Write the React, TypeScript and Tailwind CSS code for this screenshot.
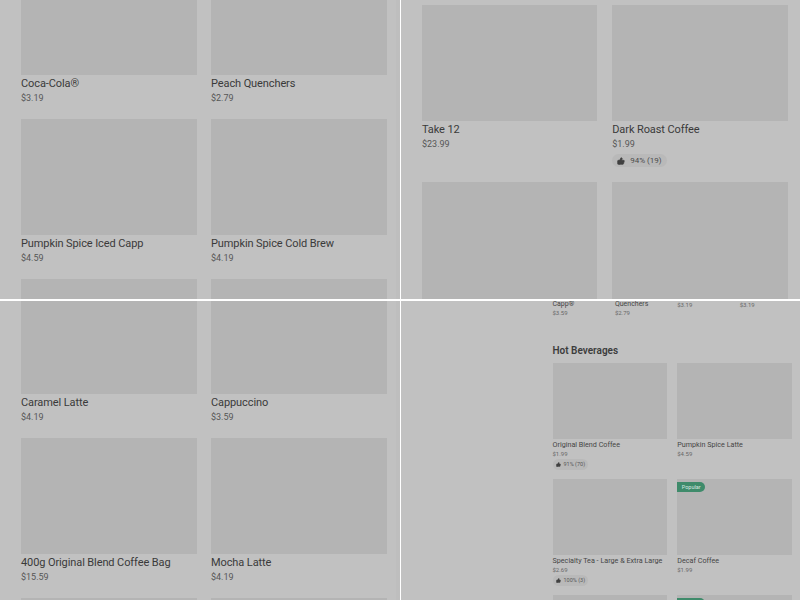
import { ThumbsUp } from "lucide-react"

type Item = { name?: string; price?: string; rating?: string; badge?: string }

function LargeCard({ name, price, rating, imageClass }: Item & { imageClass?: string }) {
  return (
    <div className="min-w-0">
      <div className={`bg-[#b4b4b4] ${imageClass ?? "h-[116px]"}`} />
      {name && <div className="mt-[1px] text-[11px] leading-[16px] tracking-[-0.1px] text-[#383838] whitespace-nowrap">{name}</div>}
      {price && <div className="text-[9px] leading-[12px] text-[#555555]">{price}</div>}
      {rating && (
        <div className="mt-[4px] flex w-fit items-center gap-[5px] h-[13px] rounded-full bg-[#b9b9b9] px-[5px] text-[8px] text-[#4a4a4a]">
          <ThumbsUp className="w-[8px] h-[8px] fill-[#3f3f3f] text-[#3f3f3f]" />
          {rating}
        </div>
      )}
    </div>
  )
}

function SmallCard({ name, price, rating, badge }: Item) {
  return (
    <div className="min-w-0">
      <div className="relative h-[76px] bg-[#b4b4b4]">
        {badge !== undefined && (
          <div className="absolute left-0 top-[3px] h-[10px] w-[28px] rounded-r-full bg-[#3d8a6a] text-center text-[5.5px] leading-[10px] text-[#d8e8e0]">
            {badge}
          </div>
        )}
      </div>
      {name && <div className="mt-[1px] text-[7.2px] leading-[10px] text-[#444444] whitespace-nowrap">{name}</div>}
      {price && <div className="text-[6px] leading-[8px] text-[#666666]">{price}</div>}
      {rating && (
        <div className="mt-[1px] flex w-fit items-center gap-[3px] h-[11px] rounded-full bg-[#b9b9b9] px-[3px] text-[5.5px] text-[#555555]">
          <ThumbsUp className="w-[5px] h-[5px] fill-[#3f3f3f] text-[#3f3f3f]" />
          {rating}
        </div>
      )}
    </div>
  )
}

const tileOne: Item[] = [
  { name: "Coca-Cola®", price: "$3.19" },
  { name: "Peach Quenchers", price: "$2.79" },
  { name: "Pumpkin Spice Iced Capp", price: "$4.59" },
  { name: "Pumpkin Spice Cold Brew", price: "$4.19" },
  {},
  {},
]

const tileThree: Item[] = [
  { name: "Caramel Latte", price: "$4.19" },
  { name: "Cappuccino", price: "$3.59" },
  { name: "400g Original Blend Coffee Bag", price: "$15.59" },
  { name: "Mocha Latte", price: "$4.19" },
  {},
  {},
]

const hot: Item[] = [
  { name: "Original Blend Coffee", price: "$1.99", rating: "91% (70)" },
  { name: "Pumpkin Spice Latte", price: "$4.59" },
  { name: "Specialty Tea - Large & Extra Large", price: "$2.69", rating: "100% (3)" },
  { name: "Decaf Coffee", price: "$1.99", badge: "Popular" },
  {},
  { badge: "" },
]

export default function App() {
  return (
    <div className="w-[800px] h-[600px] overflow-hidden bg-white opacity-[.99] grid grid-cols-[400px_399px] grid-rows-[299px_299px] gap-x-[1px] gap-y-[2px] font-['Roboto',sans-serif]">
      {/* top left */}
      <div className="overflow-hidden bg-[#c1c1c1] pl-[21px] pr-[9px] border-r-[4px] border-[#bebebe]">
        <div className="grid grid-cols-2 gap-x-[14px] gap-y-[15px] mt-[-41px]">
          {tileOne.map((item, i) => (
            <LargeCard key={i} {...item} />
          ))}
        </div>
      </div>

      {/* top right */}
      <div className="overflow-hidden bg-[#c1c1c1] pl-[21px] pr-[12.5px] pt-[5px]">
        <div className="grid grid-cols-2 gap-x-[15px] gap-y-[15px]">
          <LargeCard name="Take 12" price="$23.99" />
          <LargeCard name="Dark Roast Coffee" price="$1.99" rating="94% (19)" />
          <LargeCard imageClass="h-[200px]" />
          <LargeCard imageClass="h-[200px]" />
        </div>
      </div>

      {/* bottom left */}
      <div className="overflow-hidden bg-[#c1c1c1] pl-[21px] pr-[9px] border-r-[4px] border-[#bebebe]">
        <div className="grid grid-cols-2 gap-x-[14px] gap-y-[15px] mt-[-23px]">
          {tileThree.map((item, i) => (
            <LargeCard key={i} {...item} />
          ))}
        </div>
      </div>

      {/* bottom right */}
      <div className="overflow-hidden bg-[#c1c1c1] pl-[151.5px] pr-[8px]">
        <div className="grid grid-cols-4 gap-x-[10px] h-[16px] text-[6px] leading-[8px] text-[#666666]">
          <div>
            <div className="text-[7px] leading-[7px] text-[#444444]">Capp®</div>
            <div className="mt-[1px]">$3.59</div>
          </div>
          <div>
            <div className="text-[7px] leading-[7px] text-[#444444]">Quenchers</div>
            <div className="mt-[1px]">$2.79</div>
          </div>
          <div>$3.19</div>
          <div>$3.19</div>
        </div>
        <h2 className="mt-[27px] text-[10px] leading-[14px] font-semibold text-[#3a3a3a]">Hot Beverages</h2>
        <div className="mt-[5px] grid grid-cols-2 gap-x-[10px] gap-y-[9px]">
          {hot.map((item, i) => (
            <SmallCard key={i} {...item} />
          ))}
        </div>
      </div>
    </div>
  )
}
